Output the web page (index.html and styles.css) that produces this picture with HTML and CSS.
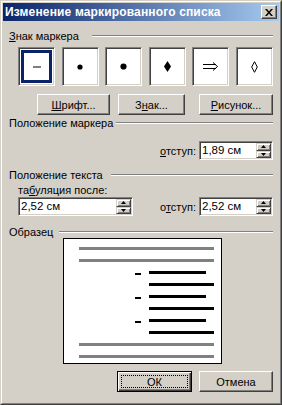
FILE: index.html
```html
<!DOCTYPE html>
<html lang="ru">
<head>
<meta charset="utf-8">
<title>Изменение маркированного списка</title>
<link rel="stylesheet" href="styles.css">
</head>
<body>
<div class="window">
  <div class="window-in">
    <div class="titlebar">
      <span class="title">Изменение маркированного списка</span>
      <span class="close-btn"><svg width="8" height="7" viewBox="0 0 8 7"><path d="M0 0h2l2 2.5L6 0h2L5 3.5 8 7H6L4 4.5 2 7H0l3-3.5z" fill="#000"/></svg></span>
    </div>
    <div class="content">
      <div class="group-head"><span class="gh-text"><u>З</u>нак маркера</span><span class="gh-line gl1"></span></div>
      <div class="markers">
        <div class="marker selected"><div class="sel-ring"><svg width="8" height="2"><rect width="8" height="1" y="0.5" fill="#000"/></svg></div></div>
        <div class="marker"><svg width="6" height="6" viewBox="0 0 6 6"><circle cx="3" cy="3" r="2.6" fill="#000"/></svg></div>
        <div class="marker"><svg width="7" height="7" viewBox="0 0 7 7"><circle cx="3.5" cy="3.5" r="3.1" fill="#000"/></svg></div>
        <div class="marker"><svg width="7" height="11" viewBox="0 0 7 11"><path d="M3.5 0L7 5.5 3.5 11 0 5.5z" fill="#000"/></svg></div>
        <div class="marker"><svg width="16" height="9" viewBox="0 0 16 9"><path d="M0 2.5h13M0 6.5h13M10 0.5l4.5 4-4.5 4" fill="none" stroke="#000" stroke-width="1"/></svg></div>
        <div class="marker"><svg width="7" height="12" viewBox="0 0 7 12"><path d="M3.5 0.7L6.3 6 3.5 11.3 0.7 6z" fill="none" stroke="#000" stroke-width="1"/></svg></div>
      </div>
      <div class="btn-row">
        <span class="btn b-font"><u>Ш</u>рифт...</span>
        <span class="btn b-sign">З<u>н</u>ак...</span>
        <span class="btn b-pic"><u>Р</u>исунок...</span>
      </div>
      <div class="group-head gh2"><span class="gh-text">Положение маркера</span><span class="gh-line gl2"></span></div>
      <div class="field-row r1">
        <span class="lbl"><u>о</u>тступ:</span>
        <div class="field"><span class="val">1,89 см</span><span class="spin"><span class="sb"><svg width="5" height="3"><path d="M2.5 0L5 3H0z" fill="#000"/></svg></span><span class="sb"><svg width="5" height="3"><path d="M0 0h5L2.5 3z" fill="#000"/></svg></span></span></div>
      </div>
      <div class="group-head gh3"><span class="gh-text">Положение текста</span><span class="gh-line gl3"></span></div>
      <div class="tab-lbl">та<u>б</u>уляция после:</div>
      <div class="field-row r2">
        <div class="field wide"><span class="val">2,52 см</span><span class="spin"><span class="sb"><svg width="5" height="3"><path d="M2.5 0L5 3H0z" fill="#000"/></svg></span><span class="sb"><svg width="5" height="3"><path d="M0 0h5L2.5 3z" fill="#000"/></svg></span></span></div>
        <span class="lbl">о<u>т</u>ступ:</span>
        <div class="field"><span class="val">2,52 см</span><span class="spin"><span class="sb"><svg width="5" height="3"><path d="M2.5 0L5 3H0z" fill="#000"/></svg></span><span class="sb"><svg width="5" height="3"><path d="M0 0h5L2.5 3z" fill="#000"/></svg></span></span></div>
      </div>
      <div class="group-head gh4"><span class="gh-text">Образец</span><span class="gh-line gl4"></span></div>
      <div class="preview">
        <div class="pl gray"></div>
        <div class="pl gray"></div>
        <div class="prow"><span class="dash"></span><span class="pl black short"></span></div>
        <div class="prow"><span class="pl black long"></span></div>
        <div class="prow"><span class="dash"></span><span class="pl black short"></span></div>
        <div class="prow"><span class="pl black long"></span></div>
        <div class="prow"><span class="dash"></span><span class="pl black short"></span></div>
        <div class="prow"><span class="pl black long"></span></div>
        <div class="pl gray"></div>
        <div class="pl gray"></div>
      </div>
      <div class="foot">
        <span class="btn default"><span class="focus">ОК</span></span>
        <span class="btn b-cancel">Отмена</span>
      </div>
    </div>
  </div>
</div>
</body>
</html>
```

FILE: styles.css
```css
* { box-sizing: border-box; }
html, body { margin: 0; padding: 0; background: #d4d0c8; }
body {
  font-family: "Liberation Sans", Arial, sans-serif;
  font-size: 11px;
  color: #000;
}
u { text-decoration: underline; text-underline-offset: 1px; }

.window {
  width: 282px;
  height: 405px;
  border: 1px solid;
  border-color: #d4d0c8 #404040 #404040 #d4d0c8;
  background: #d4d0c8;
}
.window-in {
  height: 100%;
  border: 1px solid;
  border-color: #fff #808080 #808080 #fff;
  padding: 1px;
}
.titlebar {
  height: 18px;
  display: flex;
  align-items: center;
  justify-content: space-between;
  background: linear-gradient(to right, #0a246a, #a6caf0);
  padding: 0 2px 0 2px;
}
.title {
  color: #fff;
  font-weight: bold;
  font-size: 12px;
  letter-spacing: 0.15px;
  white-space: nowrap;
}
.close-btn {
  width: 16px;
  height: 14px;
  background: #d4d0c8;
  border: 1px solid;
  border-color: #fff #404040 #404040 #fff;
  box-shadow: inset -1px -1px #808080;
  display: flex;
  align-items: center;
  justify-content: center;
  padding-right: 1px;
}
.close-btn svg { display: block; }

.content {
  padding: 0 6px 0 6px;
  display: flex;
  flex-direction: column;
}

.group-head {
  height: 13px;
  display: flex;
  align-items: center;
  margin-top: 9px;
  white-space: nowrap;
}
.gh-text { line-height: 13px; }
.gh-line {
  flex: 1;
  height: 2px;
  border-top: 1px solid #808080;
  border-bottom: 1px solid #fff;
  margin-top: -1px;
}
.gl1 { margin-left: 13px; }
.gl2 { margin-left: 3px; }
.gl3 { margin-left: 8px; }
.gl4 { margin-left: 6px; }
.gh2 { margin-top: 2px; }
.gh3 { margin-top: 9px; }
.gh4 { margin-top: 10px; height: 12px; }

.markers {
  margin-top: 4px;
  padding-left: 9px;
  display: flex;
  justify-content: space-between;
}
.marker {
  width: 37px;
  height: 39px;
  background: #fff;
  border: 1px solid;
  border-color: #808080 #fff #fff #808080;
  box-shadow: inset 1px 1px #404040, inset -1px -1px #d4d0c8;
  display: flex;
  align-items: center;
  justify-content: center;
}
.marker svg { display: block; }
.marker.selected { padding: 2px; }
.sel-ring {
  width: 100%;
  height: 100%;
  border: 3px solid #0a246a;
  display: flex;
  align-items: center;
  justify-content: center;
}

.btn {
  height: 21px;
  display: flex;
  align-items: center;
  justify-content: center;
  border: 1px solid;
  border-color: #fff #404040 #404040 #fff;
  box-shadow: inset -1px -1px #808080;
  background: #d4d0c8;
  white-space: nowrap;
}
.btn-row {
  margin-top: 8px;
  display: flex;
}
.b-font { width: 73px; margin-left: 28px; }
.b-sign { width: 67px; margin-left: 8px; }
.b-pic { width: 74px; margin-left: 14px; }

.field-row {
  display: flex;
  align-items: center;
  justify-content: flex-end;
}
.r1 { margin-top: 11px; }
.lbl { margin-right: 3px; }
.field {
  width: 74px;
  height: 19px;
  background: #fff;
  border: 1px solid;
  border-color: #808080 #fff #fff #808080;
  box-shadow: inset 1px 1px #404040, inset -1px -1px #d4d0c8;
  display: flex;
  padding: 1px;
}
.field.wide { width: 115px; margin-right: auto; margin-left: 9px; }
.val {
  flex: 1;
  padding-left: 1px;
  line-height: 15px;
  font-size: 11.5px;
}
.spin {
  width: 15px;
  display: flex;
  flex-direction: column;
}
.sb {
  flex: 1;
  background: #d4d0c8;
  border: 1px solid;
  border-color: #d4d0c8 #404040 #404040 #d4d0c8;
  box-shadow: inset 1px 1px #fff, inset -1px -1px #808080;
  display: flex;
  align-items: center;
  justify-content: center;
}
.sb svg { display: block; }

.tab-lbl {
  margin-top: 2px;
  padding-left: 9px;
  line-height: 13px;
}
.r2 { margin-top: 0; }

.preview {
  margin: 0 0 0 54px;
  width: 159px;
  height: 126px;
  background: #fff;
  border: 1px solid #000;
  padding-top: 8px;
  display: flex;
  flex-direction: column;
  gap: 9px;
}
.pl { height: 3px; display: block; }
.pl.gray { background: #808080; margin-left: 15px; width: 135px; }
.prow { display: flex; height: 3px; }
.dash {
  width: 6px;
  height: 2px;
  background: #000;
  margin-left: 71px;
  margin-top: 2px;
}
.pl.black { background: #000; }
.pl.short { width: 57px; margin-left: 8px; }
.pl.long { width: 65px; margin-left: 85px; }

.foot {
  margin-top: 7px;
  display: flex;
  justify-content: flex-end;
  gap: 7px;
}
.foot .btn { width: 75px; }
.foot .b-cancel { width: 74px; }
.btn.default {
  border: 1px solid #000;
  box-shadow: inset 1px 1px #fff, inset -1px -1px #404040, inset -2px -2px #808080;
  padding: 3px;
}
.focus {
  width: 100%;
  height: 100%;
  border: 1px dotted #000;
  display: flex;
  align-items: center;
  justify-content: center;
}
```
